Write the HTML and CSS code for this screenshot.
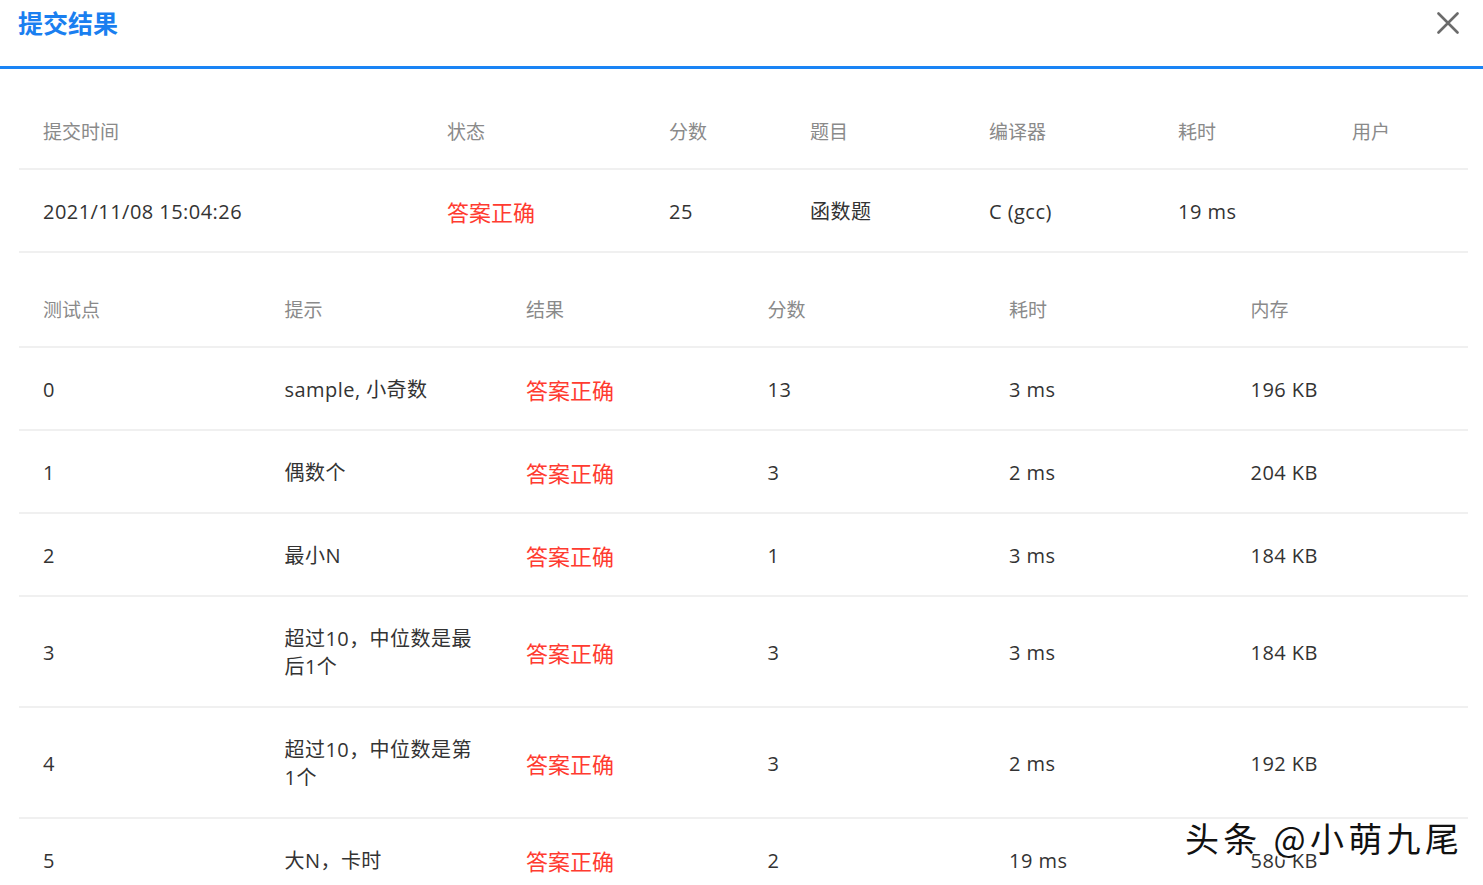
FILE: index.html
```html
<!DOCTYPE html>
<html lang="zh-CN">
<head>
<meta charset="utf-8">
<title>提交结果</title>
<link rel="stylesheet" href="styles.css">
</head>
<body>
<div class="modal">
  <div class="modal-header">
    <div class="title">提交结果</div>
    <svg class="close" width="22" height="22" viewBox="0 0 22 22">
      <path d="M1.5 1.5 L20.5 20.5 M20.5 1.5 L1.5 20.5" stroke="#6b6b6b" stroke-width="2.6" stroke-linecap="round" fill="none"/>
    </svg>
  </div>
  <div class="content">
    <div class="grid grid-summary">
      <div class="cell th">提交时间</div>
      <div class="cell th">状态</div>
      <div class="cell th">分数</div>
      <div class="cell th">题目</div>
      <div class="cell th">编译器</div>
      <div class="cell th">耗时</div>
      <div class="cell th">用户</div>

      <div class="cell td">2021/11/08 15:04:26</div>
      <div class="cell td red">答案正确</div>
      <div class="cell td">25</div>
      <div class="cell td">函数题</div>
      <div class="cell td">C (gcc)</div>
      <div class="cell td">19 ms</div>
      <div class="cell td"></div>
    </div>

    <div class="grid grid-cases">
      <div class="cell th">测试点</div>
      <div class="cell th">提示</div>
      <div class="cell th">结果</div>
      <div class="cell th">分数</div>
      <div class="cell th">耗时</div>
      <div class="cell th">内存</div>

      <div class="cell td">0</div>
      <div class="cell td">sample, 小奇数</div>
      <div class="cell td red">答案正确</div>
      <div class="cell td">13</div>
      <div class="cell td">3 ms</div>
      <div class="cell td">196 KB</div>

      <div class="cell td">1</div>
      <div class="cell td">偶数个</div>
      <div class="cell td red">答案正确</div>
      <div class="cell td">3</div>
      <div class="cell td">2 ms</div>
      <div class="cell td">204 KB</div>

      <div class="cell td">2</div>
      <div class="cell td">最小N</div>
      <div class="cell td red">答案正确</div>
      <div class="cell td">1</div>
      <div class="cell td">3 ms</div>
      <div class="cell td">184 KB</div>

      <div class="cell td">3</div>
      <div class="cell td">超过10，中位数是最后1个</div>
      <div class="cell td red">答案正确</div>
      <div class="cell td">3</div>
      <div class="cell td">3 ms</div>
      <div class="cell td">184 KB</div>

      <div class="cell td">4</div>
      <div class="cell td">超过10，中位数是第1个</div>
      <div class="cell td red">答案正确</div>
      <div class="cell td">3</div>
      <div class="cell td">2 ms</div>
      <div class="cell td">192 KB</div>

      <div class="cell td">5</div>
      <div class="cell td">大N，卡时</div>
      <div class="cell td red">答案正确</div>
      <div class="cell td">2</div>
      <div class="cell td">19 ms</div>
      <div class="cell td">580 KB</div>
    </div>
  </div>
  <div class="watermark">头条 @小萌九尾</div>
</div>
</body>
</html>
```

FILE: styles.css
```css
html, body {
  margin: 0;
  padding: 0;
  background: #ffffff;
}

body {
  width: 1483px;
  height: 885px;
  overflow: hidden;
  font-family: "Open Sans", "Noto Sans CJK SC", sans-serif;
}

.modal {
  position: relative;
  width: 1483px;
  height: 885px;
  overflow: hidden;
}

.modal-header {
  height: 66px;
  display: flex;
  justify-content: space-between;
  align-items: flex-start;
  padding: 0 24px 0 18px;
  border-bottom: 3px solid #1a84f5;
}

.title {
  font-family: "Noto Sans CJK SC", sans-serif;
  font-size: 25px;
  font-weight: 700;
  line-height: 44px;
  color: #1a7ff0;
}

.close {
  margin-top: 12px;
}

.content {
  padding: 25px 15px 0 19px;
}

.grid {
  display: grid;
}

.grid-summary {
  grid-template-columns: 404px 222px 141px 179px 189px 174px 140px;
}

.grid-cases {
  margin-top: 19px;
  grid-template-columns: repeat(6, 1fr);
}

.cell {
  display: flex;
  align-items: center;
  border-bottom: 2px solid #f0f0f0;
  padding-left: 24px;
  padding-right: 24px;
}

.th {
  font-size: 19px;
  line-height: 28px;
  color: #8a8a8a;
  padding-top: 24px;
  padding-bottom: 22px;
}

.td {
  font-size: 20px;
  line-height: 28px;
  letter-spacing: 0.45px;
  color: #333333;
  padding-top: 27.5px;
  padding-bottom: 25.5px;
}

.red {
  color: #ff3b30;
  font-size: 22px;
  letter-spacing: 0;
}

.watermark {
  position: absolute;
  left: 1185px;
  top: 815px;
  font-family: "Noto Sans CJK SC", sans-serif;
  font-size: 34px;
  line-height: 46px;
  color: #111111;
  letter-spacing: 4.3px;
  text-shadow: -2px 2px 0 #ffffff, 2px -1px 0 rgba(255,255,255,0.6);
  white-space: nowrap;
}
```
